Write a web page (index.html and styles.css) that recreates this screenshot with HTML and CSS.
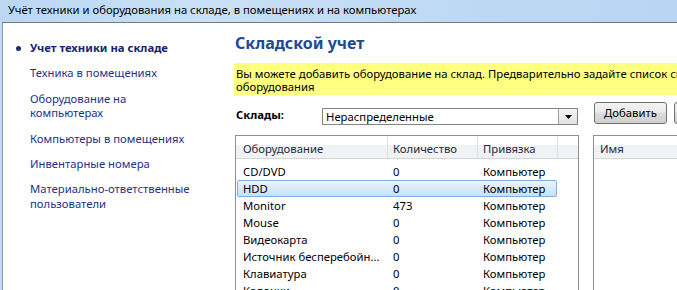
FILE: index.html
```html
<!DOCTYPE html>
<html lang="ru">
<head>
<meta charset="utf-8">
<title>Складской учет</title>
<link rel="stylesheet" href="styles.css">
</head>
<body>
<div class="window">
  <div class="titlebar">Учёт техники и оборудования на складе, в помещениях и на компьютерах</div>
  <div class="client">
    <nav class="sidebar">
      <div class="nav-item active"><span class="marker"><span class="dot"></span></span><span class="nav-text">Учет техники на складе</span></div>
      <div class="nav-item"><span class="marker"></span><span class="nav-text">Техника в помещениях</span></div>
      <div class="nav-item"><span class="marker"></span><span class="nav-text">Оборудование на<br>компьютерах</span></div>
      <div class="nav-item"><span class="marker"></span><span class="nav-text">Компьютеры в помещениях</span></div>
      <div class="nav-item"><span class="marker"></span><span class="nav-text">Инвентарные номера</span></div>
      <div class="nav-item"><span class="marker"></span><span class="nav-text">Материально-ответственные<br>пользователи</span></div>
    </nav>
    <main class="main">
      <h1 class="heading">Складской учет</h1>
      <div class="note">Вы можете добавить оборудование на склад. Предварительно задайте список складов и типов<br>оборудования</div>
      <div class="toolbar">
        <span class="label">Склады:</span>
        <div class="combo">
          <span class="combo-text">Нераспределенные</span>
          <span class="combo-arrow"><svg width="7" height="4" viewBox="0 0 7 4"><path d="M0 0H7L3.5 4Z" fill="#000"/></svg></span>
        </div>
        <button class="btn">Добавить</button>
        <button class="btn btn-next">Удалить</button>
      </div>
      <div class="lists">
        <div class="listview equipment">
          <div class="lv-header">
            <div class="hcol h1">Оборудование</div>
            <div class="hcol h2">Количество</div>
            <div class="hcol h3">Привязка</div>
            <div class="hcol hrest"></div>
          </div>
          <div class="lv-body">
            <div class="row"><span class="cell c1">CD/DVD</span><span class="cell c2">0</span><span class="cell c3">Компьютер</span></div>
            <div class="row selected"><span class="cell c1">HDD</span><span class="cell c2">0</span><span class="cell c3">Компьютер</span></div>
            <div class="row"><span class="cell c1">Monitor</span><span class="cell c2">473</span><span class="cell c3">Компьютер</span></div>
            <div class="row"><span class="cell c1">Mouse</span><span class="cell c2">0</span><span class="cell c3">Компьютер</span></div>
            <div class="row"><span class="cell c1">Видеокарта</span><span class="cell c2">0</span><span class="cell c3">Компьютер</span></div>
            <div class="row"><span class="cell c1">Источник бесперебойн...</span><span class="cell c2">0</span><span class="cell c3">Компьютер</span></div>
            <div class="row"><span class="cell c1">Клавиатура</span><span class="cell c2">0</span><span class="cell c3">Компьютер</span></div>
            <div class="row"><span class="cell c1">Колонки</span><span class="cell c2">0</span><span class="cell c3">Компьютер</span></div>
          </div>
        </div>
        <div class="listview names">
          <div class="lv-header">
            <div class="hcol hname">Имя</div>
          </div>
        </div>
      </div>
    </main>
  </div>
</div>
</body>
</html>
```

FILE: styles.css
```css
html, body {
  margin: 0;
  padding: 0;
}
body {
  width: 677px;
  height: 290px;
  overflow: hidden;
  background: #c3dbf4;
  font-family: "Noto Sans", "Open Sans", sans-serif;
  font-size: 11.3px;
  color: #000;
}
.window {
  width: 820px;
  height: 290px;
  display: flex;
  flex-direction: column;
}
.titlebar {
  height: 22px;
  line-height: 20px;
  padding-left: 8px;
  background: linear-gradient(90deg, #bcd7f3 0%, #c9e0f6 25%, #bdd8f3 60%, #b6d3f1 100%);
  white-space: nowrap;
  color: #000;
}
.client {
  flex: 1;
  display: flex;
  margin-left: 2px;
  background: #fff;
  border-top: 1px solid #6f7b88;
  border-left: 1px solid #8a9aae;
  overflow: hidden;
}
.sidebar {
  width: 218px;
  flex: none;
  padding: 18px 0 0 13px;
  display: flex;
  flex-direction: column;
  gap: 10.9px;
}
.nav-item {
  display: flex;
  line-height: 14.5px;
  color: #1e3287;
}
.nav-item.active {
  font-weight: bold;
  color: #16246e;
}
.marker {
  width: 14px;
  flex: none;
  display: flex;
  align-items: flex-start;
  padding-top: 5px;
  box-sizing: border-box;
}
.dot {
  width: 5px;
  height: 5px;
  border-radius: 50%;
  background: #1b2a6e;
}
.main {
  flex: 1;
  padding-top: 10px;
  display: flex;
  flex-direction: column;
}
.heading {
  margin: 0 0 10px 1px;
  font-size: 16px;
  line-height: 20px;
  font-weight: bold;
  color: #1c4b94;
}
.note {
  background: #ffff80;
  padding: 4px 2px 2px 2px;
  line-height: 13px;
  white-space: nowrap;
  color: #000;
}
.toolbar {
  margin-top: 7px;
  height: 23px;
  display: flex;
  align-items: flex-start;
}
.label {
  width: 86px;
  padding-left: 2px;
  padding-top: 5px;
  line-height: 16px;
  font-weight: bold;
  flex: none;
}
.combo {
  margin-top: 6px;
  width: 256px;
  height: 17px;
  box-sizing: border-box;
  border: 1px solid #848484;
  display: flex;
  align-items: center;
  background: #fff;
  flex: none;
}
.combo-text {
  flex: 1;
  padding-left: 3px;
  line-height: 15px;
}
.combo-arrow {
  width: 19px;
  height: 15px;
  box-sizing: border-box;
  border-left: 1px solid #a0a0a0;
  background: linear-gradient(#f6f6f6, #e2e2e2);
  display: flex;
  align-items: center;
  justify-content: center;
}
.btn {
  margin-left: 16px;
  width: 73px;
  height: 22px;
  flex: none;
  border: 1px solid #707070;
  border-radius: 3px;
  background: linear-gradient(#f2f2f2 0%, #ebebeb 45%, #dddddd 50%, #cfcfcf 100%);
  font-family: inherit;
  font-size: 11.3px;
  color: #000;
  padding: 0;
  line-height: 18px;
}
.btn-next {
  margin-left: 7px;
}
.lists {
  margin-top: 10px;
  display: flex;
  gap: 14px;
  padding-left: 1px;
}
.listview {
  height: 200px;
  box-sizing: border-box;
  border: 1px solid #8c8f96;
  background: #fff;
  flex: none;
}
.equipment {
  width: 344px;
}
.names {
  width: 200px;
}
.lv-header {
  height: 23px;
  box-sizing: border-box;
  display: flex;
  border-bottom: 1px solid #d5d5d5;
  background: linear-gradient(#ffffff 0%, #ffffff 40%, #f1f2f4 41%, #f1f2f4 100%);
  color: #1e2b3c;
}
.hcol {
  box-sizing: border-box;
  padding-top: 3px;
  line-height: 19px;
  padding-left: 5px;
  border-right: 1px solid #dedfe2;
  white-space: nowrap;
}
.h1 { width: 152px; padding-left: 7px; }
.h2 { width: 90px; }
.h3 { width: 80px; }
.hrest { flex: 1; border-right: none; }
.hname { padding-left: 6px; border-right: none; }
.lv-body {
  padding: 4px 0 0 1px;
}
.row {
  width: 320px;
  height: 17px;
  box-sizing: border-box;
  border: 1px solid transparent;
  border-radius: 2px;
  display: flex;
  align-items: center;
  white-space: nowrap;
}
.row.selected {
  border-color: #84acdd;
  background: linear-gradient(#eaf3fd, #c8e0fb);
}
.cell {
  box-sizing: border-box;
  padding-left: 5px;
  line-height: 15px;
  overflow: hidden;
}
.c1 { width: 150px; }
.c2 { width: 90px; }
.c3 { width: 78px; }
```
